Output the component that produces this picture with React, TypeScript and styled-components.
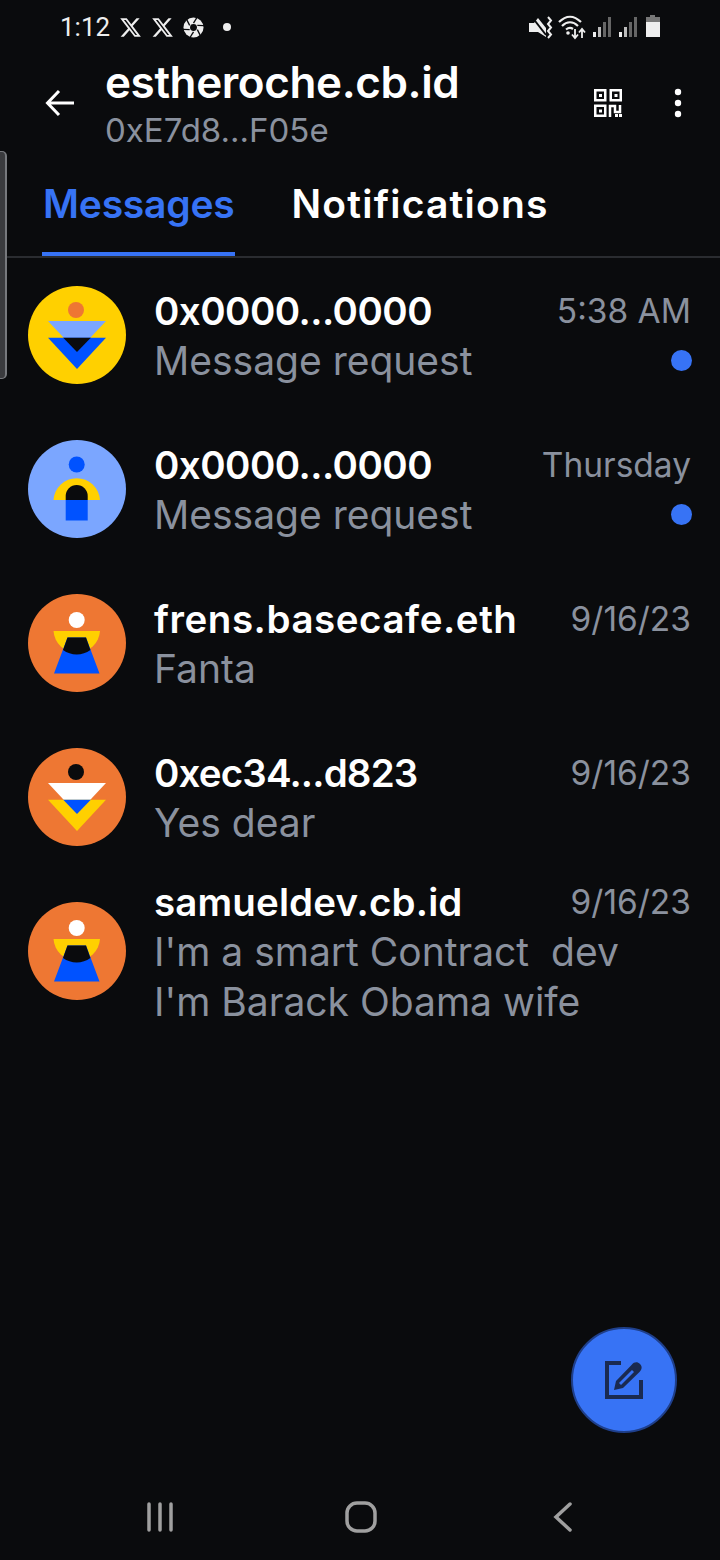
import React from 'react';
import styled, { createGlobalStyle } from 'styled-components';
import { FaXTwitter } from 'react-icons/fa6';

const GlobalStyle = createGlobalStyle`
  html, body {
    margin: 0;
    padding: 0;
    background: #0a0b0d;
  }
`;

const Screen = styled.div`
  position: relative;
  width: 720px;
  height: 1560px;
  overflow: hidden;
  display: flex;
  flex-direction: column;
  background: #0a0b0d;
  color: #fff;
  font-family: Inter, "Liberation Sans", sans-serif;
`;

const StatusBar = styled.div`
  height: 54px;
  flex: none;
  display: flex;
  align-items: center;
  justify-content: space-between;
  padding: 0 60px;
  box-sizing: border-box;
  color: #eee;
`;

const StatusLeft = styled.div`
  display: flex;
  align-items: center;
  gap: 9px;
`;

const StatusRight = styled.div`
  display: flex;
  align-items: center;
  gap: 7px;
`;

const Clock = styled.span`
  font-family: Roboto, sans-serif;
  font-size: 26px;
`;

const Header = styled.header`
  height: 98px;
  flex: none;
  display: flex;
  align-items: center;
  padding: 0 38px 0 45px;
  box-sizing: border-box;
`;

const BackButton = styled.div`
  width: 32px;
  height: 32px;
  margin-right: 28px;
  display: flex;
  align-items: center;
`;

const Identity = styled.div`
  flex: 1;
  margin-top: 4px;
`;

const Name = styled.div`
  font-size: 44px;
  font-weight: 600;
  line-height: 50px;
  letter-spacing: -0.4px;
`;

const Address = styled.div`
  font-size: 33px;
  line-height: 46px;
  color: #8a919e;
`;

const HeaderActions = styled.div`
  display: flex;
  align-items: center;
  gap: 52px;
`;

const Tabs = styled.nav`
  height: 106px;
  flex: none;
  display: flex;
  gap: 56px;
  padding: 0 0 0 42px;
  box-sizing: border-box;
  border-bottom: 2px solid #2a2c30;
`;

const Tab = styled.div<{ $active?: boolean }>`
  height: 104px;
  padding-left: 1px;
  box-sizing: border-box;
  font-size: 39px;
  font-weight: 600;
  line-height: 104px;
  letter-spacing: ${(p) => (p.$active ? '-0.2px' : '1.2px')};
  color: ${(p) => (p.$active ? '#3773f5' : '#fff')};
  border-bottom: 4px solid ${(p) => (p.$active ? '#3773f5' : 'transparent')};
`;

const List = styled.div`
  flex: 1;
  display: flex;
  flex-direction: column;
`;

const Row = styled.div`
  height: 154px;
  flex: none;
  display: flex;
  align-items: center;
  gap: 28px;
  padding: 0 28px;
  box-sizing: border-box;
`;

const RowBody = styled.div`
  flex: 1;
  min-width: 0;
`;

const Line = styled.div`
  display: flex;
  align-items: center;
  justify-content: space-between;
  height: 50px;
`;

const Title = styled.span<{ $tracking: number }>`
  font-size: 38.5px;
  font-weight: 600;
  margin-top: 2px;
  letter-spacing: ${(p) => p.$tracking}px;
`;

const Time = styled.span`
  font-size: 33.5px;
  color: #8a919e;
  margin: 2px 1px 0 0;
`;

const Preview = styled.span`
  font-size: 39px;
  color: #8a919e;
  white-space: pre;
`;

const UnreadDot = styled.span`
  width: 21px;
  height: 21px;
  border-radius: 50%;
  background: #3773f5;
`;

const Scrollbar = styled.div`
  position: absolute;
  left: 0;
  top: 151px;
  width: 7px;
  height: 228px;
  box-sizing: border-box;
  background: #3a3b3e;
  border-right: 2px solid #77797d;
  border-top: 1px solid #77797d;
  border-bottom: 1px solid #77797d;
  border-radius: 0 5px 5px 0;
`;

const ComposeButton = styled.div`
  position: absolute;
  left: 571px;
  top: 1327px;
  width: 106px;
  height: 106px;
  box-sizing: border-box;
  border-radius: 50%;
  background: #3773f5;
  border: 2px solid #1f3f8a;
  display: flex;
  align-items: center;
  justify-content: center;
`;

const NavBar = styled.div`
  flex: none;
  height: 44px;
  margin-bottom: 21px;
  display: flex;
  align-items: center;
  gap: 172px;
  padding-left: 147px;
`;

type Tone = { bg: string; top: string; bottom: string; overlap: string; dot: string };

const Funnel = ({ bg, top, bottom, overlap, dot }: Tone) => (
  <svg width="98" height="98" viewBox="0 0 98 98">
    <circle cx="49" cy="49" r="49" fill={bg} />
    <circle cx="48" cy="24" r="8" fill={dot} />
    <path d="M20 35H78L49 66Z" fill={top} />
    <path d="M20 51.7H78L49 83Z" fill={bottom} />
    <path d="M35.2 51.7H62.8L49 66Z" fill={overlap} />
  </svg>
);

const Arch = () => (
  <svg width="98" height="98" viewBox="0 0 98 98">
    <circle cx="49" cy="49" r="49" fill="#7ba6ff" />
    <circle cx="48.7" cy="24.5" r="8" fill="#0052ff" />
    <path d="M25.5 60A23.3 23.3 0 0 1 72 60Z" fill="#ffd000" />
    <path d="M37.7 60V56A11 11 0 0 1 59.7 56V60Z" fill="#0a0b0d" />
    <rect x="37.7" y="60" width="22" height="20.5" fill="#0052ff" />
  </svg>
);

const Figure = () => (
  <svg width="98" height="98" viewBox="0 0 98 98">
    <circle cx="49" cy="49" r="49" fill="#ee7733" />
    <circle cx="48.7" cy="26" r="8" fill="#fff" />
    <path d="M25.5 37H72A23.3 23.3 0 0 1 25.5 37Z" fill="#ffd000" />
    <path d="M39.5 43.5H58L71.5 79.5H26Z" fill="#0052ff" />
    <path d="M39.5 43.5H58L62.4 56A23.3 23.3 0 0 1 35 56Z" fill="#0a0b0d" />
  </svg>
);

const AvatarYellow = () => (
  <Funnel bg="#ffd000" top="#7ba6ff" bottom="#0052ff" overlap="#0a0b0d" dot="#ee7733" />
);

const AvatarOrange = () => (
  <Funnel bg="#ee7733" top="#fff" bottom="#ffd000" overlap="#0052ff" dot="#0a0b0d" />
);

const ApertureIcon = () => (
  <svg width="21" height="21" viewBox="0 0 22 22">
    <circle cx="11" cy="11" r="10.5" fill="#eee" />
    <g stroke="#0a0b0d" strokeWidth="1.4">
      <path d="M11 6.5L15 0" />
      <path d="M15 8.8L22.5 9" />
      <path d="M15 13.2L18.5 20" />
      <path d="M11 15.5L7 22" />
      <path d="M7 13.2L-0.5 13" />
      <path d="M7 8.8L3.5 2" />
    </g>
    <circle cx="11" cy="11" r="3.6" fill="#0a0b0d" />
  </svg>
);

const SignalIcon = () => (
  <svg width="19" height="22" viewBox="0 0 19 22">
    <rect x="0" y="16" width="3" height="5" fill="#eee" />
    <rect x="5" y="11" width="3" height="10" fill="#bbb" />
    <rect x="10" y="6" width="3" height="15" fill="#666" />
    <rect x="15" y="1" width="3" height="20" fill="#666" />
  </svg>
);

const SoundWifiIcon = () => (
  <svg width="57" height="26" viewBox="0 0 57 26" fill="none">
    {/* muted with vibrate */}
    <path d="M0 9H5L9 4L17 14V23L9 18H0Z" fill="#eee" />
    <path d="M3 3L17 21" stroke="#0a0b0d" strokeWidth="2" />
    <path d="M19 3L22 6.5L19 10L22 13.5L19 17L22 20.5L19 24" stroke="#eee" strokeWidth="2" />
    {/* wifi with up and down arrows */}
    <path d="M30 8C37 1 45 1 52 8" stroke="#eee" strokeWidth="2.2" />
    <path d="M33 12C38 7 44 7 49 12" stroke="#eee" strokeWidth="2.2" />
    <path d="M37 15.5C39.5 13.5 42 13.5 44 15" stroke="#eee" strokeWidth="2.2" />
    <circle cx="39" cy="19" r="1.8" fill="#eee" />
    <path d="M46 15V23M43 20.5L46 24L49 20.5" stroke="#eee" strokeWidth="1.8" />
    <path d="M53 24V16M50 18.5L53 15L56 18.5" stroke="#eee" strokeWidth="1.8" />
  </svg>
);

const BatteryIcon = () => (
  <svg width="15" height="24" viewBox="0 0 15 24">
    <rect x="5" y="0" width="5" height="3" fill="#777" />
    <rect x="1" y="2" width="14" height="6" fill="#777" />
    <rect x="1" y="7" width="14" height="15" fill="#eee" />
  </svg>
);

const QrIcon = () => (
  <svg width="28" height="28" viewBox="0 0 28 28" fill="none">
    <g stroke="#fff" strokeWidth="2.5">
      <rect x="1.25" y="1.25" width="10" height="10" />
      <rect x="16.75" y="1.25" width="10" height="10" />
      <rect x="1.25" y="16.75" width="10" height="10" />
      <path d="M16 28V17H21V23H26V16" />
    </g>
    <g fill="#fff">
      <rect x="5" y="5" width="3" height="3" />
      <rect x="20.5" y="5" width="3" height="3" />
      <rect x="5" y="20.5" width="3" height="3" />
      <rect x="21" y="25" width="3" height="3" />
      <rect x="25" y="25" width="3" height="3" />
    </g>
  </svg>
);

const MoreIcon = () => (
  <svg width="8" height="30" viewBox="0 0 8 30">
    <circle cx="4" cy="4" r="3.2" fill="#fff" />
    <circle cx="4" cy="15" r="3.2" fill="#fff" />
    <circle cx="4" cy="26" r="3.2" fill="#fff" />
  </svg>
);

const BackIcon = () => (
  <svg width="30" height="28" viewBox="0 0 30 28" fill="none">
    <path d="M29 14H3M14 2L2.5 14L14 26" stroke="#fff" strokeWidth="3" />
  </svg>
);

const ComposeIcon = () => (
  <svg width="40" height="40" viewBox="0 0 40 40" fill="none">
    <path d="M17 3H3V37H37V20" stroke="#1a2a50" strokeWidth="4" />
    <path d="M10 30L12 21L28 4.5C30 2 33.5 1.5 36 4C38.5 6.5 38 9.5 35.5 12L19 28Z" fill="#1a2a50" />
    <path d="M15 23L28 10L30 12L17 25Z" fill="#3773f5" />
  </svg>
);

const rows = [
  { id: 1, avatar: <AvatarYellow />, title: '0x0000...0000', tracking: -0.55, time: '5:38 AM', lines: ['Message request'], unread: true },
  { id: 2, avatar: <Arch />, title: '0x0000...0000', tracking: -0.55, time: 'Thursday', lines: ['Message request'], unread: true },
  { id: 3, avatar: <Figure />, title: 'frens.basecafe.eth', tracking: 0.55, time: '9/16/23', lines: ['Fanta'] },
  { id: 4, avatar: <AvatarOrange />, title: '0xec34...d823', tracking: -0.85, time: '9/16/23', lines: ['Yes dear'] },
  { id: 5, avatar: <Figure />, title: 'samueldev.cb.id', tracking: 0.13, time: '9/16/23', lines: ["I'm a smart Contract  dev", "I'm Barack Obama wife"] },
];

const App = () => {
  return (
    <Screen>
      <GlobalStyle />
      <StatusBar>
        <StatusLeft>
          <Clock>1:12</Clock>
          <FaXTwitter size={23} />
          <FaXTwitter size={23} />
          <ApertureIcon />
          <svg width="26" height="10" viewBox="0 0 26 10">
            <circle cx="14" cy="5" r="4" fill="#eee" />
          </svg>
        </StatusLeft>
        <StatusRight>
          <SoundWifiIcon />
          <SignalIcon />
          <SignalIcon />
          <BatteryIcon />
        </StatusRight>
      </StatusBar>

      <Header>
        <BackButton>
          <BackIcon />
        </BackButton>
        <Identity>
          <Name>estheroche.cb.id</Name>
          <Address>0xE7d8...F05e</Address>
        </Identity>
        <HeaderActions>
          <QrIcon />
          <MoreIcon />
        </HeaderActions>
      </Header>

      <Tabs>
        <Tab $active>Messages</Tab>
        <Tab>Notifications</Tab>
      </Tabs>

      <List>
        {rows.map((row) => (
          <Row key={row.id}>
            {row.avatar}
            <RowBody>
              <Line>
                <Title $tracking={row.tracking}>{row.title}</Title>
                <Time>{row.time}</Time>
              </Line>
              {row.lines.map((text, i) => (
                <Line key={i}>
                  <Preview>{text}</Preview>
                  {row.unread && <UnreadDot />}
                </Line>
              ))}
            </RowBody>
          </Row>
        ))}
      </List>

      <Scrollbar />

      <ComposeButton>
        <ComposeIcon />
      </ComposeButton>

      <NavBar>
        <svg width="26" height="30" viewBox="0 0 26 30" fill="none">
          <path d="M2 2V28M13 2V28M24 2V28" stroke="#a0a0a0" strokeWidth="3.5" strokeLinecap="round" />
        </svg>
        <svg width="32" height="32" viewBox="0 0 32 32" fill="none">
          <rect x="2" y="2" width="28" height="28" rx="10" stroke="#a0a0a0" strokeWidth="3.5" />
        </svg>
        <svg width="24" height="30" viewBox="0 0 24 30" fill="none">
          <path d="M21 2L7 15L21 28" stroke="#a0a0a0" strokeWidth="3.5" strokeLinecap="round" />
        </svg>
      </NavBar>
    </Screen>
  );
};

export default App;
